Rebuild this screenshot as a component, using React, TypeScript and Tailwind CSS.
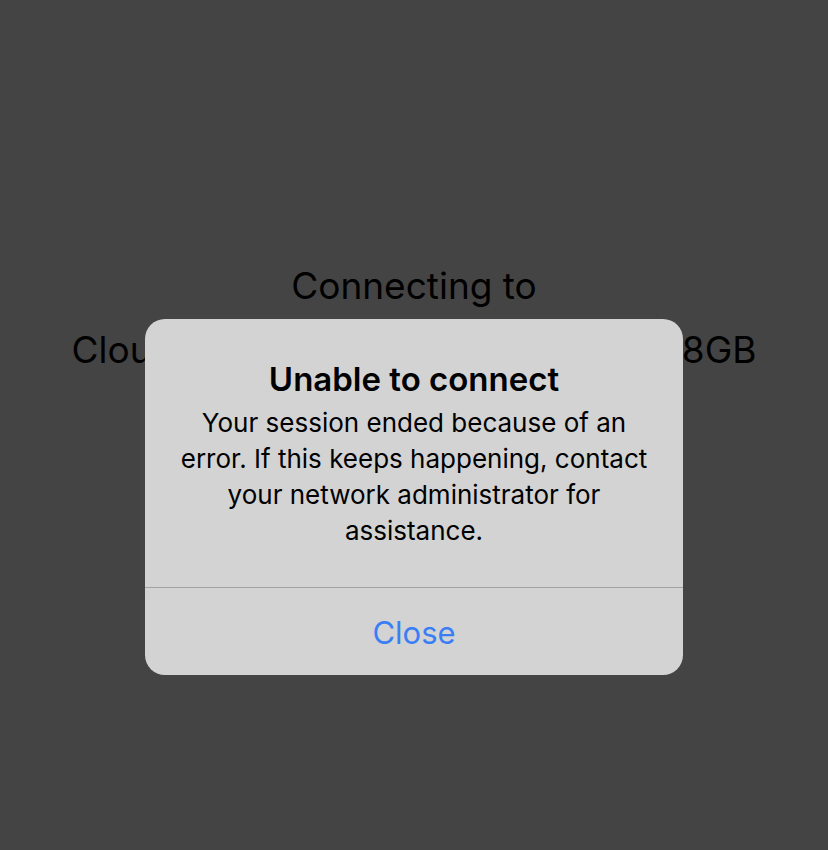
export default function App() {
  return (
    <div
      className="relative h-[850px] w-[828px] overflow-hidden bg-[#444444] text-black"
      style={{ fontFamily: "Inter, 'Noto Sans', sans-serif" }}
    >
      <div className="flex flex-col items-center whitespace-nowrap pt-[264px] text-[37px] leading-[44px]">
        <p>Connecting to</p>
        <p className="mt-[20px]">Cloud PC – Windows 11 – 2 vCPU / 8GB</p>
      </div>

      <div className="absolute left-[145px] top-[319px] flex h-[356px] w-[538px] flex-col rounded-[20px] bg-[#d3d3d3]">
        <div className="flex flex-col items-center pt-[42px] pb-[38px] text-center">
          <h2 className="text-[33px] font-semibold leading-[36px]">Unable to connect</h2>
          <p className="mt-[8px] text-[26px] leading-[36px]">
            Your session ended because of an
            <br />
            error. If this keeps happening, contact
            <br />
            your network administrator for
            <br />
            assistance.
          </p>
        </div>
        <div className="h-px bg-[#a3a3a3]" />
        <button className="flex flex-1 items-center justify-center pt-[3px] text-[31px] text-[#3a7ef6]">Close</button>
      </div>
    </div>
  );
}
